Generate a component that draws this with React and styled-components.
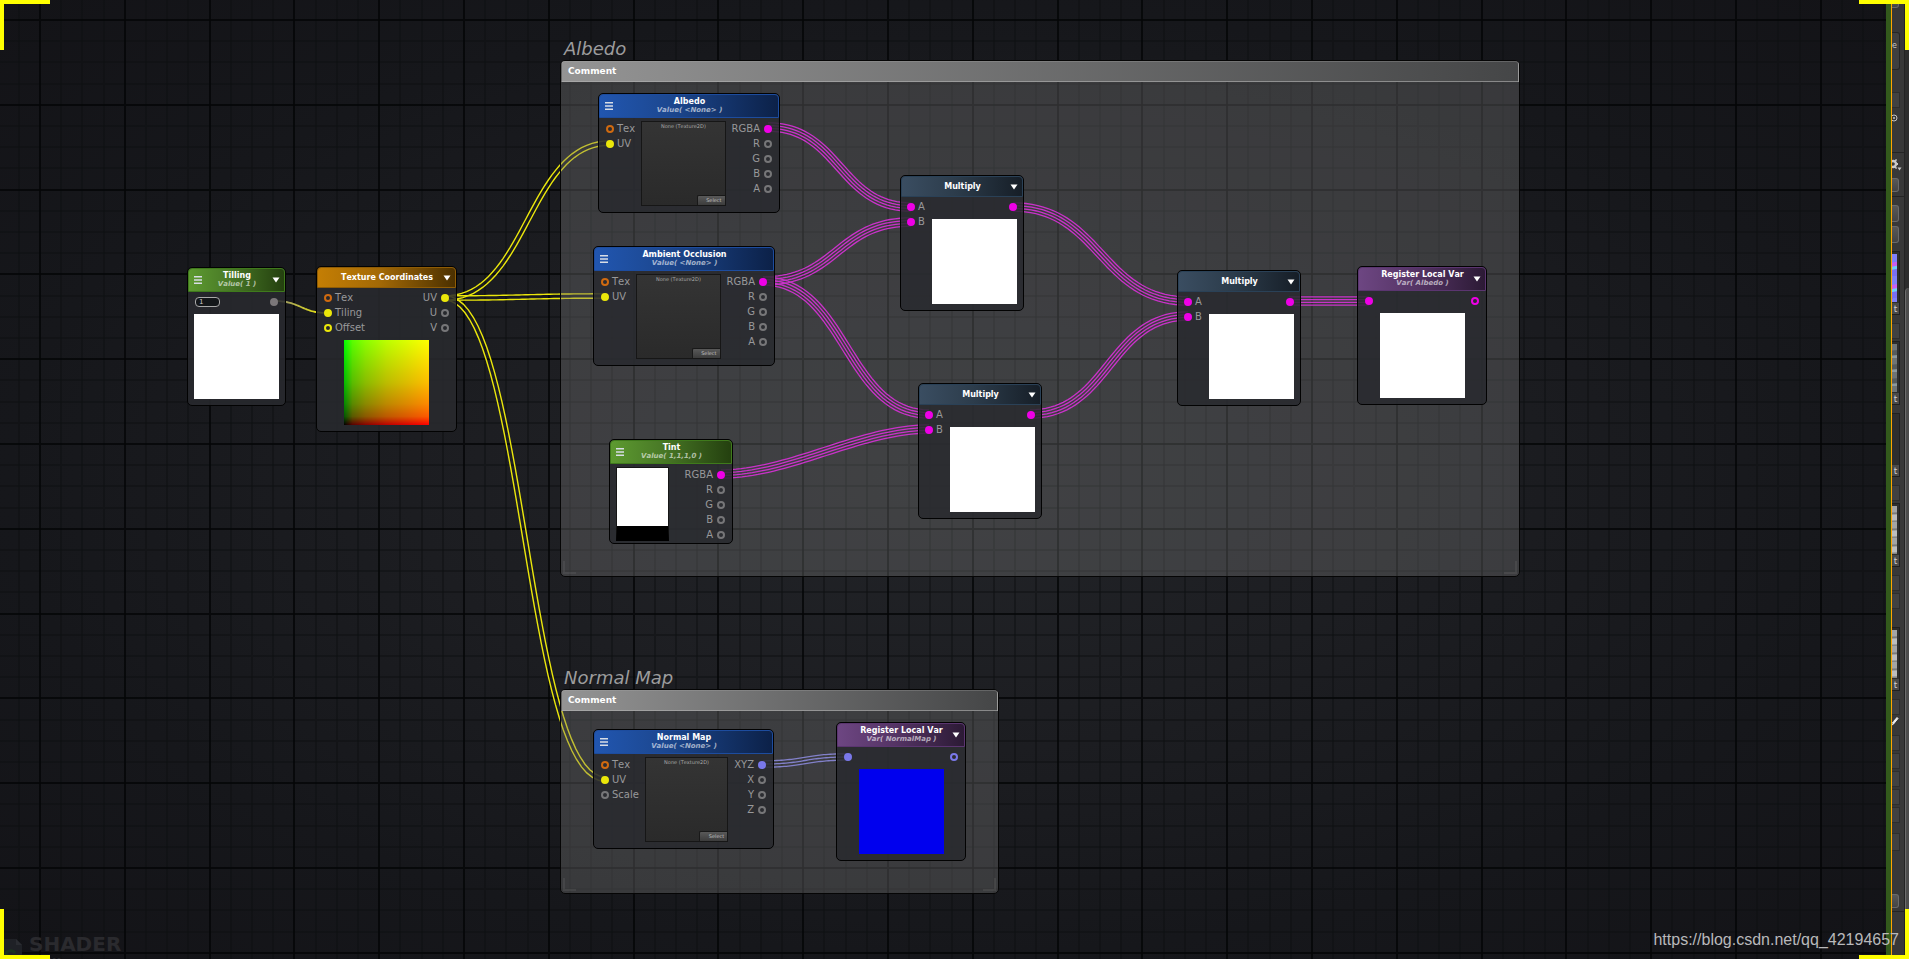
import styled, { createGlobalStyle } from 'styled-components';

const WIRES = [
  { from: [274, 301], to: [328, 313], type: 'float' },
  { from: [445, 298], to: [610, 143], type: 'vec2' },
  { from: [445, 298], to: [605, 296], type: 'vec2' },
  { from: [445, 298], to: [605, 779], type: 'vec2' },
  { from: [768, 127], to: [911, 207], type: 'color' },
  { from: [763, 281], to: [911, 222], type: 'color' },
  { from: [763, 281], to: [929, 414], type: 'color' },
  { from: [721, 474], to: [929, 429], type: 'color', bend: 0.33 },
  { from: [1013, 207], to: [1188, 301], type: 'color' },
  { from: [1030, 414], to: [1188, 316], type: 'color' },
  { from: [1289, 301], to: [1369, 301], type: 'color' },
  { from: [763, 764], to: [847, 757], type: 'vec3' },
];

const WIRE_STYLES = {
  float: { offsets: [0], color: 'url(#floatWire)', width: 1.8 },
  vec2: { offsets: [-2.2, 2.2], color: '#ebe70c', width: 1.4 },
  vec3: { offsets: [-3.2, 0, 3.2], color: '#8886f8', width: 1.3 },
  color: { offsets: [-4.2, -1.4, 1.4, 4.2], color: '#f80cf8', width: 1.3 },
};

const INSPECTOR_ITEMS = [
  { kind: 'button', gap: 0, height: 8 },
  { kind: 'box', gap: 24, height: 38, text: 'e' },
  { kind: 'field', gap: 22, height: 16 },
  { kind: 'picker', gap: 4, height: 12 },
  { kind: 'rule', gap: 28, height: 1 },
  { kind: 'gear', gap: 5, height: 14 },
  { kind: 'button', gap: 6, height: 14 },
  { kind: 'rule', gap: 4, height: 1 },
  { kind: 'button', gap: 8, height: 17 },
  { kind: 'button', gap: 4, height: 17 },
  { kind: 'slot', gap: 8, height: 64, look: 'normal' },
  { kind: 'field', gap: 8, height: 16 },
  { kind: 'slot', gap: 2, height: 64, look: 'rock' },
  { kind: 'slot', gap: 8, height: 64, look: 'empty' },
  { kind: 'field', gap: 8, height: 16 },
  { kind: 'slot', gap: 2, height: 64, look: 'bricks' },
  { kind: 'field', gap: 8, height: 16 },
  { kind: 'field', gap: 2, height: 16 },
  { kind: 'slot', gap: 18, height: 64, look: 'bricks' },
  { kind: 'field', gap: 8, height: 16 },
  { kind: 'dropper', gap: 2, height: 10 },
  { kind: 'field', gap: 8, height: 16 },
  { kind: 'field', gap: 2, height: 16 },
  { kind: 'field', gap: 2, height: 16 },
  { kind: 'field', gap: 2, height: 16 },
  { kind: 'field', gap: 2, height: 16 },
  { kind: 'field', gap: 10, height: 18 },
  { kind: 'button', gap: 43, height: 14 },
  { kind: 'rule', gap: 3, height: 1 },
];

// samples the bezier and pushes each point out along its normal
function strandPath([x0, y0], [x1, y1], offset, bend = 0.5) {
  const steps = 40;
  const dx = x1 - x0;
  const dy = y1 - y0;
  const points = [];
  for (let i = 0; i <= steps; i++) {
    const t = i / steps;
    const u = 1 - t;
    const x = x0 + dx * (3 * u * u * t * bend + 3 * u * t * t * (1 - bend) + t * t * t);
    const y = y0 + dy * (3 * t * t - 2 * t * t * t);
    const tx = dx * (3 * u * u * bend + 6 * u * t * (1 - 2 * bend) + 3 * t * t * bend);
    const ty = dy * 6 * t * u;
    const len = Math.hypot(tx, ty);
    points.push(`${(x - (ty / len) * offset).toFixed(2)} ${(y + (tx / len) * offset).toFixed(2)}`);
  }
  return `M${points.join('L')}`;
}

function Grid() {
  const minor = Array.from({ length: 20 }, (_, i) => i).filter(i => i % 4 !== 0);
  const major = [0, 1, 2, 3, 4];
  return (
    <Backdrop aria-hidden="true">
      <defs>
        <pattern id="grid" x="39" y="19" width="424" height="424" patternUnits="userSpaceOnUse">
          {minor.map(i => {
            const p = Math.round(i * 21.2);
            return <path key={i} d={`M${p} 0h2v424h-2zM0 ${p}h424v2h-424z`} fill="#0e1012" fillOpacity="0.5" />;
          })}
          {major.map(i => {
            const p = Math.round(i * 84.8);
            return <path key={i} d={`M${p} 0h2v424h-2zM0 ${p}h424v2h-424z`} fill="#040506" fillOpacity="0.8" />;
          })}
        </pattern>
      </defs>
      <rect width="100%" height="100%" fill="url(#grid)" />
    </Backdrop>
  );
}

function Wires() {
  return (
    <Backdrop aria-hidden="true">
      <defs>
        <linearGradient id="floatWire" gradientUnits="userSpaceOnUse" x1="286" y1="0" x2="316" y2="0">
          <stop offset="0" stopColor="#a5a25c" />
          <stop offset="1" stopColor="#e3df1a" />
        </linearGradient>
      </defs>
      {WIRES.map(({ from, to, type, bend }, i) =>
        WIRE_STYLES[type].offsets.map(offset => (
          <path
            key={`${i}${offset}`}
            d={strandPath(from, to, offset, bend)}
            fill="none"
            stroke={WIRE_STYLES[type].color}
            strokeWidth={WIRE_STYLES[type].width}
          />
        ))
      )}
    </Backdrop>
  );
}

function Comment({ title, ...box }) {
  return (
    <CommentWrapper {...box}>
      <CommentTitle>{title}</CommentTitle>
      <CommentBox>
        <CommentHeader>Comment</CommentHeader>
        <Handles>
          <Handle />
          <Handle $right />
        </Handles>
      </CommentBox>
    </CommentWrapper>
  );
}

function Node({ title, value, tone, menu, arrow, children, ...box }) {
  return (
    <NodeBox {...box}>
      <NodeHeader $tone={tone} $tall={!!value}>
        {menu ? (
          <IconButton aria-label={`${title} options`}>
            <svg width="8" height="8" viewBox="0 0 8 8">
              <path d="M0 0h8v1.6h-8zM0 3.2h8v1.6h-8zM0 6.4h8v1.6h-8z" fill="#d8dde6" />
            </svg>
          </IconButton>
        ) : <span />}
        <Titles>
          <NodeTitle>{title}</NodeTitle>
          {value && <NodeValue>{value}</NodeValue>}
        </Titles>
        {arrow && (
          <IconButton $end aria-label={`Collapse ${title}`}>
            <svg width="8" height="6" viewBox="0 0 8 6">
              <path d="M.5 .5h7L4 5.5z" fill="#fff" />
            </svg>
          </IconButton>
        )}
      </NodeHeader>
      {children}
    </NodeBox>
  );
}

function Port({ label, color, filled, out }) {
  return (
    <PortRow $out={out}>
      <Dot $color={color} $filled={filled} />
      {label && <span>{label}</span>}
    </PortRow>
  );
}

function Multiply(props) {
  return (
    <Node title="Multiply" tone="slate" arrow {...props}>
      <NodeBody $flush>
        <Column>
          <Port label="A" color="magenta" filled />
          <Port label="B" color="magenta" filled />
        </Column>
        <Column $end>
          <OutputInset>
            <Port color="magenta" filled out />
          </OutputInset>
          <Preview />
        </Column>
      </NodeBody>
    </Node>
  );
}

function TextureNode({ inputs, outputs, color, ...props }) {
  return (
    <Node value="Value( <None> )" tone="blue" menu {...props}>
      <NodeBody>
        <Column>
          {inputs.map(port => <Port key={port.label} {...port} />)}
        </Column>
        <TextureSlot>
          <span>None (Texture2D)</span>
          <SelectButton>Select</SelectButton>
        </TextureSlot>
        <Column $end>
          {outputs.map((label, i) => (
            <Port key={label} label={label} color={i === 0 ? color : 'grey'} filled={i === 0} out />
          ))}
        </Column>
      </NodeBody>
    </Node>
  );
}

function RegisterVar({ color, fill, ...props }) {
  return (
    <Node title="Register Local Var" tone="purple" arrow {...props}>
      <StackedBody>
        <PortBar>
          <Port color={color} filled />
          <Port color={color} out />
        </PortBar>
        <Preview $fill={fill} />
      </StackedBody>
    </Node>
  );
}

function InspectorItem({ kind, text, look, gap, height }) {
  const size = { $gap: gap, $height: height };
  if (kind === 'button') return <InspectorButton {...size} aria-label="Inspector action" />;
  if (kind === 'field') return <InspectorField {...size} aria-label="Property value" />;
  if (kind === 'rule') return <Rule {...size} />;
  if (kind === 'box') return <InspectorBox {...size}>{text}</InspectorBox>;
  if (kind === 'slot') {
    return (
      <ThumbSlot {...size}>
        <Thumb $look={look} />
        <ThumbSelect>t</ThumbSelect>
      </ThumbSlot>
    );
  }
  return (
    <InspectorIcon {...size} viewBox={`0 0 12 ${height}`}>
      {kind === 'picker' && (
        <>
          <circle cx="2" cy="6" r="3" fill="none" stroke="#c4c4c4" strokeWidth="1" />
          <circle cx="2" cy="6" r="1" fill="#c4c4c4" />
        </>
      )}
      {kind === 'gear' && (
        <>
          <circle cx="1" cy="6" r="3" fill="none" stroke="#c9c9c9" strokeWidth="2.4" />
          <path d="M4 5h2v2h-2zM2.6 2.2l1.5-1.3 1 1.2-1.4 1.3zM2.6 9.8l1.5 1.3 1-1.2-1.4-1.3z" fill="#c9c9c9" />
          <path d="M5.5 9.5h4l-2 3z" fill="#c9c9c9" />
        </>
      )}
      {kind === 'dropper' && <path d="M0 5.5l1.5 1.5L6 1.5 5 .5 1.5 4.500M0 8l2-1.5" fill="#eee" stroke="#eee" strokeWidth="1" />}
    </InspectorIcon>
  );
}

const TEX_PORT = { label: 'Tex', color: 'orange' };
const UV_PORT = { label: 'UV', color: 'yellow', filled: true };

export default function App() {
  return (
    <Window>
      <GlobalStyle />
      <Canvas>
        <Grid />
        <Wires />

        <Comment title="Albedo" $x={560} $y={38} $w={960} $h={539} />
        <Comment title="Normal Map" $x={560} $y={667} $w={439} $h={227} />

        <Node title="Tilling" value="Value( 1 )" tone="green" menu arrow $x={187} $y={267} $w={99}>
          <StackedBody>
            <PortBar>
              <ValueInput aria-label="Tilling value" defaultValue="1" />
              <Port color="silver" filled out />
            </PortBar>
            <Preview />
          </StackedBody>
        </Node>

        <Node title="Texture Coordinates" tone="amber" arrow $x={316} $y={266} $w={141}>
          <StackedBody>
            <PortBar>
              <Column>
                <Port {...TEX_PORT} />
                <Port label="Tiling" color="yellow" filled />
                <Port label="Offset" color="yellow" />
              </Column>
              <Column $end>
                <Port label="UV" color="yellow" filled out />
                <Port label="U" color="grey" out />
                <Port label="V" color="grey" out />
              </Column>
            </PortBar>
            <UvPreview />
          </StackedBody>
        </Node>

        <TextureNode title="Albedo" $x={598} $y={93} $w={182} color="magenta"
          inputs={[TEX_PORT, UV_PORT]} outputs={['RGBA', 'R', 'G', 'B', 'A']} />
        <TextureNode title="Ambient Occlusion" $x={593} $y={246} $w={182} color="magenta"
          inputs={[TEX_PORT, UV_PORT]} outputs={['RGBA', 'R', 'G', 'B', 'A']} />

        <Node title="Tint" value="Value( 1,1,1,0 )" tone="green" menu $x={609} $y={439} $w={124}>
          <NodeBody $swatch>
            <Swatch />
            <Column $end>
              <Port label="RGBA" color="magenta" filled out />
              <Port label="R" color="grey" out />
              <Port label="G" color="grey" out />
              <Port label="B" color="grey" out />
              <Port label="A" color="grey" out />
            </Column>
          </NodeBody>
        </Node>

        <Multiply $x={900} $y={175} $w={124} />
        <Multiply $x={918} $y={383} $w={124} />
        <Multiply $x={1177} $y={270} $w={124} />

        <RegisterVar value="Var( Albedo )" color="magenta" $x={1357} $y={266} $w={130} />

        <TextureNode title="Normal Map" $x={593} $y={729} $w={181} color="periwinkle"
          inputs={[TEX_PORT, UV_PORT, { label: 'Scale', color: 'grey' }]} outputs={['XYZ', 'X', 'Y', 'Z']} />
        <RegisterVar value="Var( NormalMap )" color="periwinkle" fill="#0000ee" $x={836} $y={722} $w={130} />

        <ShaderBadge>
          <svg width="22" height="26" viewBox="0 0 22 26">
            <path d="M0 0h16l6 6v20h-22z" fill="#1f2126" />
            <path d="M16 0l6 6h-6z" fill="#2a2c31" />
            <path d="M15 14c-2-3-9-3-9 1 0 3 9 2 9 6 0 3-8 4-10 1" fill="none" stroke="#1b3420" strokeWidth="3" />
          </svg>
          <div>
            <ShaderType>SHADER</ShaderType>
            <ShaderName>lib/Font</ShaderName>
          </div>
        </ShaderBadge>
      </Canvas>

      <DockEdge />
      <Inspector>
        {INSPECTOR_ITEMS.map((item, i) => <InspectorItem key={i} {...item} />)}
      </Inspector>
      <ScrollRail>
        <ScrollThumb />
      </ScrollRail>

      <Watermark href="https://blog.csdn.net/qq_42194657">https://blog.csdn.net/qq_42194657</Watermark>
      <Corner $top $left />
      <Corner $top />
      <Corner $left />
      <Corner />
    </Window>
  );
}

const PORT_COLORS = {
  orange: '#d06a10',
  yellow: '#ebe70a',
  grey: '#767678',
  silver: '#7b7779',
  magenta: '#ee00e6',
  periwinkle: '#7a78ea',
};

const TONES = {
  green: 'linear-gradient(to right, #5d9a30, #4a7b27 40%, #24400f)',
  amber: 'linear-gradient(to right, #c47e04, #a36906 45%, #4b3000)',
  blue: 'linear-gradient(to right, #2156b0, #1c478f 40%, #0c2148)',
  slate: 'linear-gradient(to right, #3a4d61, #2c3c4b 45%, #161e27)',
  purple: 'linear-gradient(to right, #6d4682, #553465 45%, #2c1a35)',
};

const EDGES = {
  green: '#3f7a1c',
  amber: '#8f5c05',
  blue: '#1d4c9e',
  slate: '#2a4157',
  purple: '#5b3570',
};

const THUMBS = {
  normal: 'repeating-linear-gradient(170deg, #7f7ff8 0 8px, #c95ff0 9px 12px, #6fd0f5 13px 15px, #7a6ff2 16px 22px)',
  rock: 'repeating-linear-gradient(175deg, #6f7475 0 6px, #565b5d 7px 11px, #8d989c 12px 14px)',
  bricks: 'repeating-linear-gradient(178deg, #a4a4a4 0 6px, #7b7b7b 7px 8px, #bdbdbd 9px 14px, #868686 15px 16px)',
  empty: '#2e2e2e',
};

const GlobalStyle = createGlobalStyle`
  * {
    box-sizing: border-box;
  }
  body {
    margin: 0;
    background: #121317;
    font-family: "DejaVu Sans", sans-serif;
    font-kerning: none;
  }
  button, input {
    margin: 0;
    padding: 0;
    border: 0;
    font-family: inherit;
  }
`;

const Window = styled.div`
  position: relative;
  display: flex;
  height: 100vh;
  overflow: hidden;
`;

const Canvas = styled.main`
  position: relative;
  flex: 1;
  min-width: 0;
  overflow: hidden;
  background: radial-gradient(ellipse at center, #222428 0%, #1d1e22 35%, #16171b 70%, #131317 100%);
`;

const Backdrop = styled.svg`
  position: absolute;
  top: 0;
  left: 0;
  width: 100%;
  height: 100%;
`;

const CommentWrapper = styled.section`
  position: absolute;
  left: ${p => p.$x}px;
  top: ${p => p.$y}px;
  width: ${p => p.$w}px;
  height: ${p => p.$h}px;
  display: flex;
  flex-direction: column;
`;

const CommentTitle = styled.h2`
  margin: 0;
  padding-left: 4px;
  font-size: 18px;
  line-height: 22px;
  font-weight: normal;
  font-style: italic;
  color: #9c9c9d;
`;

const CommentBox = styled.div`
  flex: 1;
  display: flex;
  flex-direction: column;
  justify-content: space-between;
  border: 1px solid #050505;
  border-radius: 5px;
  background: rgba(118, 118, 118, 0.36);
`;

const CommentHeader = styled.div`
  height: 21px;
  padding-left: 6px;
  border: 1px solid rgba(170, 170, 170, 0.3);
  border-bottom-color: rgba(180, 180, 180, 0.6);
  border-radius: 4px 4px 0 0;
  background: linear-gradient(to right, #949494, #454647);
  font-size: 9px;
  line-height: 19px;
  font-weight: bold;
  color: #fff;
`;

const Handles = styled.div`
  display: flex;
  justify-content: space-between;
  padding: 2px;
`;

const Handle = styled.span`
  width: 13px;
  height: 13px;
  border: solid rgba(120, 120, 120, 0.2);
  border-width: ${p => (p.$right ? '0 2px 2px 0' : '0 0 2px 2px')};
`;

const NodeBox = styled.article`
  position: absolute;
  left: ${p => p.$x}px;
  top: ${p => p.$y}px;
  width: ${p => p.$w}px;
  border: 1px solid #020202;
  border-radius: 5px;
  background: rgba(41, 42, 46, 0.86);
`;

const NodeHeader = styled.header`
  display: grid;
  grid-template-columns: 10px 1fr 10px;
  align-items: center;
  height: ${p => (p.$tall ? 24 : 21)}px;
  padding: 0 4px 0 5px;
  border: 1px solid ${p => EDGES[p.$tone]};
  border-radius: 4px 4px 0 0;
  background: ${p => TONES[p.$tone]};
`;

const IconButton = styled.button`
  display: flex;
  justify-self: ${p => (p.$end ? 'end' : 'start')};
  background: none;
`;

const Titles = styled.div`
  text-align: center;
  white-space: nowrap;
  font-size: 8px;
  line-height: 9px;
  font-weight: bold;
`;

const NodeTitle = styled.div`
  color: #fff;
`;

const NodeValue = styled.div`
  font-size: 7px;
  font-style: italic;
  color: rgba(255, 255, 255, 0.6);
`;

const NodeBody = styled.div`
  display: flex;
  gap: ${p => (p.$flush ? 0 : 6)}px;
  padding: ${p => {
    if (p.$flush) return '2px 6px 6px';
    if (p.$swatch) return '3px 7px 1px 6px';
    return '3px 7px 6px';
  }};
`;

const StackedBody = styled.div`
  display: flex;
  flex-direction: column;
  align-items: center;
  gap: 5px;
  padding: 2px 7px 6px;
`;

const PortBar = styled.div`
  display: flex;
  justify-content: space-between;
  align-items: center;
  align-self: stretch;
`;

const Column = styled.div`
  display: flex;
  flex-direction: column;
  align-items: ${p => (p.$end ? 'flex-end' : 'flex-start')};
  margin-left: ${p => (p.$end ? 'auto' : 0)};
`;

const OutputInset = styled.div`
  padding-bottom: 5px;
`;

const PortRow = styled.div`
  display: flex;
  flex-direction: ${p => (p.$out ? 'row-reverse' : 'row')};
  align-items: center;
  gap: ${p => (p.$out ? 4 : 3)}px;
  height: 15px;
  font-size: 10px;
  line-height: 15px;
  color: #98989a;
`;

const Dot = styled.span`
  width: 8px;
  height: 8px;
  border: 2px solid ${p => PORT_COLORS[p.$color]};
  border-radius: 50%;
  background: ${p => (p.$filled ? PORT_COLORS[p.$color] : 'transparent')};
`;

const Preview = styled.div`
  width: 85px;
  height: 85px;
  background: ${p => p.$fill || '#fff'};
`;

const UvPreview = styled(Preview)`
  background:
    linear-gradient(to right, #000, #590000 10%, #890000 25%, #bc0000 50%, #f00),
    linear-gradient(to top, #000, #005900 10%, #008900 25%, #00bc00 50%, #0f0);
  background-blend-mode: screen;
`;

const ValueInput = styled.input`
  width: 25px;
  height: 10px;
  padding: 0 3px;
  border: 1px solid #a9a9a9;
  border-radius: 4px;
  background: #14171a;
  font-size: 7px;
  color: #c8c8c8;
`;

const TextureSlot = styled.div`
  display: flex;
  flex-direction: column;
  justify-content: space-between;
  width: 85px;
  height: 85px;
  border: 1px solid #161616;
  background: linear-gradient(to bottom, #343434, #2a2a2a);
  text-align: center;
  font-size: 5px;
  line-height: 9px;
  color: #a8a8a8;
`;

const SelectButton = styled.button`
  align-self: flex-end;
  width: 28px;
  height: 10px;
  padding-right: 3px;
  border-top: 1px solid #191919;
  border-left: 1px solid #191919;
  border-radius: 2px 0 0 0;
  background: linear-gradient(to bottom, #595959, #3c3c3c);
  text-align: right;
  font-size: 5px;
  line-height: 9px;
  color: #c0c0c0;
`;

const Swatch = styled.div`
  width: 53px;
  height: 74px;
  border: 1px solid #161616;
  border-bottom: 15px solid #000;
  background: #fff;
`;

const ShaderBadge = styled.div`
  position: absolute;
  left: 0;
  bottom: -13px;
  display: flex;
  align-items: center;
  gap: 7px;
  font-weight: bold;
  color: #2a2a2e;
`;

const ShaderType = styled.div`
  font-size: 20px;
  line-height: 24px;
`;

const ShaderName = styled.div`
  padding-left: 18px;
  font-size: 14px;
  line-height: 16px;
`;

const DockEdge = styled.div`
  width: 6px;
  background: #335a1c;
  border-right: 1px solid #ffa500;
`;

const Inspector = styled.aside`
  display: flex;
  flex-direction: column;
  width: 13px;
  overflow: hidden;
  border-right: 1px solid #232323;
  background: #383838;
`;

const InspectorButton = styled.button`
  flex: none;
  width: 7px;
  height: ${p => p.$height}px;
  margin-top: ${p => p.$gap}px;
  border: solid #6a6a6a;
  border-width: 1px 1px 1px 0;
  border-radius: 0 3px 3px 0;
  background: linear-gradient(to bottom, #585858, #444);
`;

const InspectorField = styled.input`
  flex: none;
  width: 8px;
  height: ${p => p.$height}px;
  margin-top: ${p => p.$gap}px;
  border: solid #2e2e2e;
  border-width: 1px 1px 1px 0;
  background: #414141;
`;

const InspectorBox = styled.div`
  flex: none;
  width: 8px;
  height: ${p => p.$height}px;
  margin-top: ${p => p.$gap}px;
  border: solid #262626;
  border-width: 1px 1px 1px 0;
  border-radius: 0 3px 3px 0;
  background: #3f3f3f;
  font-size: 8px;
  line-height: 26px;
  color: #c4c4c4;
`;

const InspectorIcon = styled.svg`
  flex: none;
  width: 12px;
  height: ${p => p.$height}px;
  margin-top: ${p => p.$gap}px;
`;

const Rule = styled.div`
  flex: none;
  height: ${p => p.$height}px;
  margin-top: ${p => p.$gap}px;
  background: #242424;
`;

const ThumbSlot = styled.div`
  flex: none;
  display: flex;
  flex-direction: column;
  justify-content: space-between;
  width: 8px;
  height: ${p => p.$height}px;
  margin-top: ${p => p.$gap}px;
  padding-top: 2px;
  border: solid #202020;
  border-width: 1px 1px 1px 0;
  background: #2e2e2e;
`;

const Thumb = styled.div`
  width: 5px;
  height: 48px;
  background: ${p => THUMBS[p.$look]};
`;

const ThumbSelect = styled.button`
  height: 11px;
  background: #4a4a4a;
  font-size: 9px;
  line-height: 10px;
  color: #d0d0d0;
`;

const ScrollRail = styled.div`
  width: 4px;
  padding-top: 288px;
  display: flex;
  background: #2d2d2d;
`;

const ScrollThumb = styled.div`
  flex: 1;
  border-left: 1px solid #6d6d6d;
  border-radius: 4px 0 0 0;
  background: #4c4c4c;
`;

const Watermark = styled.a`
  position: absolute;
  right: 10px;
  bottom: 8px;
  font-family: "Liberation Sans", sans-serif;
  font-size: 16px;
  line-height: 22px;
  text-decoration: none;
  color: #b9b9bb;
`;

const Corner = styled.span`
  position: absolute;
  ${p => (p.$top ? 'top' : 'bottom')}: 0;
  ${p => (p.$left ? 'left' : 'right')}: 0;
  width: 50px;
  height: 50px;
  border: 0 solid #ff0;
  border-${p => (p.$top ? 'top' : 'bottom')}-width: 4px;
  border-${p => (p.$left ? 'left' : 'right')}-width: 4px;
`;
